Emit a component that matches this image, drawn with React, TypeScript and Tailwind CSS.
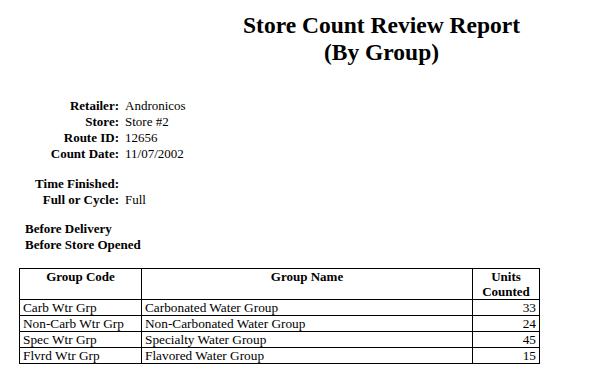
import React from "react";

const rows = [
  ["Carb Wtr Grp", "Carbonated Water Group", "33"],
  ["Non-Carb Wtr Grp", "Non-Carbonated Water Group", "24"],
  ["Spec Wtr Grp", "Specialty Water Group", "45"],
  ["Flvrd Wtr Grp", "Flavored Water Group", "15"],
];

function Field({ label, value }: { label: string; value?: string }) {
  return (
    <div className="flex h-[16px] items-center">
      <div className="w-[119px] text-right font-bold">{label}</div>
      <div className="pl-[6px]">{value}</div>
    </div>
  );
}

export default function App() {
  return (
    <div
      className="w-[593px] h-[387px] bg-white text-black text-[13px] leading-[16px] overflow-hidden"
      style={{ fontFamily: '"Liberation Serif", "Times New Roman", serif' }}
    >
      <div className="pt-[12px] pl-[170px] text-center font-bold text-[23.5px] leading-[27px]">
        <div>Store Count Review Report</div>
        <div>(By Group)</div>
      </div>
      <div className="mt-[32px] flex flex-col">
        <Field label="Retailer:" value="Andronicos" />
        <Field label="Store:" value="Store #2" />
        <Field label="Route ID:" value="12656" />
        <Field label="Count Date:" value="11/07/2002" />
      </div>
      <div className="mt-[14px] flex flex-col">
        <Field label="Time Finished:" />
        <Field label="Full or Cycle:" value="Full" />
      </div>
      <div className="mt-[13px] pl-[25px] font-bold">
        <div className="h-[16px]">Before Delivery</div>
        <div className="h-[16px]">Before Store Opened</div>
      </div>
      <table className="mt-[15px] ml-[19px] w-[520px] table-fixed border-collapse border border-black text-[13.3px]">
        <colgroup>
          <col className="w-[122px]" />
          <col className="w-[331px]" />
          <col className="w-[67px]" />
        </colgroup>
        <thead>
          <tr>
            <th className="h-[31px] border border-black align-top text-center font-bold px-[3px] pt-0 leading-[16px] text-[13px]">Group Code</th>
            <th className="h-[31px] border border-black align-top text-center font-bold px-[3px] pt-0 leading-[16px] text-[13px]">Group Name</th>
            <th className="h-[31px] border border-black align-top text-center font-bold px-[3px] pt-0 leading-[15px] text-[13px]">
              Units
              <br />
              Counted
            </th>
          </tr>
        </thead>
        <tbody>
          {rows.map((r) => (
            <tr key={r[0]}>
              <td className="h-[15px] border border-black px-[3px] py-0 leading-[15px] whitespace-nowrap">{r[0]}</td>
              <td className="h-[15px] border border-black px-[3px] py-0 leading-[15px] whitespace-nowrap">{r[1]}</td>
              <td className="h-[15px] border border-black px-[3px] py-0 leading-[15px] text-right">{r[2]}</td>
            </tr>
          ))}
        </tbody>
      </table>
    </div>
  );
}
